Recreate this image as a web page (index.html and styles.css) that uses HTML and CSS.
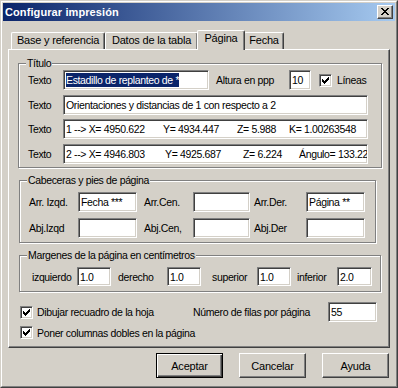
FILE: index.html
```html
<!DOCTYPE html>
<html lang="es">
<head>
<meta charset="utf-8">
<title>Configurar impresión</title>
<link rel="stylesheet" href="styles.css">
</head>
<body>
<div class="window">
  <div class="frame">
    <div class="titlebar">
      <span class="title">Configurar impresión</span>
      <div class="close">
        <svg width="8" height="7" viewBox="0 0 8 7" shape-rendering="crispEdges"><path d="M0 0h2v1H0zM6 0h2v1H6zM1 1h2v1H1zM5 1h2v1H5zM2 2h4v1H2zM3 3h2v1H3zM2 4h4v1H2zM1 5h2v1H1zM5 5h2v1H5zM0 6h2v1H0zM6 6h2v1H6z" fill="#000"/></svg>
      </div>
    </div>

    <div class="tabs">
      <div class="tab t1">Base y referencia</div>
      <div class="tab t2">Datos de la tabla</div>
      <div class="tab sel t3">Página</div>
      <div class="tab t4">Fecha</div>
    </div>

    <div class="panel">
      <div class="group g1">
        <span class="legend">Título</span>
        <div class="row">
          <span class="lbl l-texto">Texto</span>
          <div class="edit e-t1"><span class="selected">Estadillo de replanteo de *</span></div>
          <span class="lbl l-altura">Altura en ppp</span>
          <div class="edit e-ppp">10</div>
          <span class="check"><svg width="11" height="11" viewBox="0 0 11 11" shape-rendering="crispEdges"><path d="M2 4h1v3H2zM3 5h1v3H3zM4 6h1v3H4zM5 5h1v3H5zM6 4h1v3H6zM7 3h1v3H7zM8 2h1v3H8z" fill="#000"/></svg></span>
          <span class="lbl l-lineas">Líneas</span>
        </div>
        <div class="row r2">
          <span class="lbl l-texto">Texto</span>
          <div class="edit e-long">Orientaciones y distancias de 1 con respecto a 2</div>
        </div>
        <div class="row r3">
          <span class="lbl l-texto">Texto</span>
          <div class="edit e-long"><span class="seg s3a">1 --&gt; X= 4950.622</span><span class="seg s3b">Y= 4934.447</span><span class="seg s3c">Z= 5.988</span><span class="seg">K= 1.00263548</span></div>
        </div>
        <div class="row r4">
          <span class="lbl l-texto">Texto</span>
          <div class="edit e-long"><span class="seg s4a">2 --&gt; X= 4946.803</span><span class="seg s4b">Y= 4925.687</span><span class="seg s4c">Z= 6.224</span><span class="seg">Ángulo= 133.2245</span></div>
        </div>
      </div>

      <div class="group g2">
        <span class="legend">Cabeceras y pies de página</span>
        <div class="row">
          <span class="lbl l-izq">Arr. Izqd.</span>
          <div class="edit e-izq">Fecha ***</div>
          <span class="lbl l-cen">Arr.Cen.</span>
          <div class="edit e-cen"></div>
          <span class="lbl l-der">Arr.Der.</span>
          <div class="edit e-der">Página **</div>
        </div>
        <div class="row r-abj">
          <span class="lbl l-izq">Abj.Izqd</span>
          <div class="edit e-izq"></div>
          <span class="lbl l-cen">Abj.Cen,</span>
          <div class="edit e-cen"></div>
          <span class="lbl l-der">Abj.Der</span>
          <div class="edit e-der"></div>
        </div>
      </div>

      <div class="group g3">
        <span class="legend">Margenes de la página en centímetros</span>
        <div class="row row-m">
          <span class="lbl l-izqd">izquierdo</span>
          <div class="edit e-m">1.0</div>
          <span class="lbl l-dcho">derecho</span>
          <div class="edit e-m">1.0</div>
          <span class="lbl l-sup">superior</span>
          <div class="edit e-m">1.0</div>
          <span class="lbl l-inf">inferior</span>
          <div class="edit e-m e-m2">2.0</div>
        </div>
      </div>

      <div class="row opt1">
        <span class="check"><svg width="11" height="11" viewBox="0 0 11 11" shape-rendering="crispEdges"><path d="M2 4h1v3H2zM3 5h1v3H3zM4 6h1v3H4zM5 5h1v3H5zM6 4h1v3H6zM7 3h1v3H7zM8 2h1v3H8z" fill="#000"/></svg></span>
        <span class="lbl l-dib">Dibujar recuadro de la hoja</span>
        <span class="lbl l-num">Número de filas por página</span>
        <div class="edit e-num">55</div>
      </div>
      <div class="row opt2">
        <span class="check"><svg width="11" height="11" viewBox="0 0 11 11" shape-rendering="crispEdges"><path d="M2 4h1v3H2zM3 5h1v3H3zM4 6h1v3H4zM5 5h1v3H5zM6 4h1v3H6zM7 3h1v3H7zM8 2h1v3H8z" fill="#000"/></svg></span>
        <span class="lbl l-dib">Poner columnas dobles en la página</span>
      </div>
    </div>

    <div class="buttons">
      <div class="btn default">Aceptar</div>
      <div class="btn">Cancelar</div>
      <div class="btn">Ayuda</div>
    </div>
  </div>
</div>
</body>
</html>
```

FILE: styles.css
```css
* { box-sizing: border-box; }
html, body { margin: 0; padding: 0; }
body {
  width: 398px;
  height: 388px;
  overflow: hidden;
  background: #D4D0C8;
  color: #000;
  font-family: "Liberation Sans", Arial, sans-serif;
  font-size: 10.5px;
  letter-spacing: -0.35px;
}
.window {
  width: 398px;
  height: 388px;
  border: 1px solid;
  border-color: #D4D0C8 #404040 #404040 #D4D0C8;
}
.frame {
  height: 100%;
  border: 1px solid;
  border-color: #fff #808080 #808080 #fff;
  padding: 1px;
}
.titlebar {
  height: 18px;
  background: linear-gradient(to right, #0A246A, #A6CAF0);
  display: flex;
  align-items: center;
  justify-content: space-between;
  padding: 0 2px;
}
.title {
  color: #fff;
  font-weight: bold;
  font-size: 11px;
  letter-spacing: 0.1px;
}
.close {
  width: 16px;
  height: 14px;
  background: #D4D0C8;
  border: 1px solid;
  border-color: #fff #404040 #404040 #fff;
  box-shadow: inset -1px -1px #808080;
  display: flex;
  align-items: center;
  justify-content: center;
  padding: 0 1px 1px 0;
}
.close svg { display: block; }

/* tabs */
.tabs {
  display: flex;
  align-items: flex-end;
  height: 19px;
  margin: 9px 0 0 8px;
}
.tab {
  height: 17px;
  border: 1px solid;
  border-bottom: 0;
  border-color: #fff #404040 #fff #fff;
  box-shadow: inset -1px 0 #808080;
  border-radius: 2px 2px 0 0;
  text-align: center;
  line-height: 15px;
  font-size: 11px;
  letter-spacing: -0.2px;
}
.tab.sel {
  height: 20px;
  margin: 0 -1px -1px -1px;
  position: relative;
  z-index: 1;
  background: #D4D0C8;
  line-height: 14px;
}
.t1 { width: 94px; }
.t2 { width: 93px; }
.t3 { width: 48px; }
.t4 { width: 40px; }

/* tab page */
.panel {
  margin-left: 5px;
  width: 382px;
  height: 299px;
  border: 1px solid;
  border-color: #fff #404040 #404040 #fff;
  box-shadow: inset -1px -1px #808080;
}

/* group boxes */
.group {
  position: relative;
  border: 1px solid #808080;
  box-shadow: inset 1px 1px #fff, 1px 1px #fff;
}
.legend {
  position: absolute;
  top: -7px;
  left: 7px;
  padding: 0 1px;
  background: #D4D0C8;
  line-height: 13px;
  white-space: nowrap;
}
.g1 { margin: 13px 0 0 9px; width: 364px; height: 105px; padding: 6px 0 0 9px; }
.g2 { margin: 12px 0 0 10px; width: 357px; height: 63px; padding: 11px 0 0 9px; }
.g3 { margin: 12px 0 0 10px; width: 362px; height: 37px; padding: 11px 0 0 12px; }

.row {
  display: flex;
  align-items: center;
  height: 20px;
}
.r2 { margin-top: 5px; }
.r3 { margin-top: 4px; }
.r4 { margin-top: 5px; }
.r-abj { margin-top: 6px; }
.row-m { height: 19px; }

.lbl { white-space: nowrap; flex: none; }
.l-texto { width: 35px; }
.l-altura { width: 73px; margin-left: 7px; }
.l-lineas { margin-left: 5px; }
.l-izq { width: 49px; }
.l-cen { width: 49px; margin-left: 7px; }
.l-der { width: 52px; margin-left: 4px; }
.l-izqd { width: 45px; }
.l-dcho { width: 49px; margin-left: 7px; }
.l-sup { width: 45px; margin-left: 11px; }
.l-inf { width: 40px; margin-left: 6px; }

/* edit boxes */
.edit {
  flex: none;
  height: 20px;
  background: #fff;
  border: 1px solid;
  border-color: #808080 #fff #fff #808080;
  box-shadow: inset 1px 1px #404040, inset -1px -1px #D4D0C8;
  padding-left: 2px;
  display: flex;
  align-items: center;
  white-space: nowrap;
  overflow: hidden;
}
.row-m .edit { height: 19px; }
.e-t1 { width: 146px; }
.e-ppp { width: 22px; }
.e-long { width: 305px; }
.e-izq { width: 59px; }
.e-cen { width: 57px; }
.e-der { width: 59px; }
.e-m { width: 34px; }
.e-m2 { width: 35px; }
.e-num { width: 49px; }

.selected {
  background: #0A246A;
  color: #fff;
  height: 14px;
  line-height: 14px;
  display: inline-block;
}
.seg { display: inline-block; flex: none; }
.s3a { width: 97px; }
.s3b { width: 74px; }
.s3c { width: 52px; }
.s4a { width: 99px; }
.s4b { width: 78px; }
.s4c { width: 56px; }

/* checkbox */
.check {
  flex: none;
  width: 13px;
  height: 13px;
  background: #fff;
  border: 1px solid;
  border-color: #808080 #fff #fff #808080;
  box-shadow: inset 1px 1px #404040, inset -1px -1px #D4D0C8;
}
.check svg { display: block; }
.row .check { margin-left: 8px; }

.opt1 { margin: 10px 0 0 11px; }
.opt1 .check, .opt2 .check { margin-left: 0; }
.l-dib { margin-left: 4px; }
.opt1 .l-dib { width: 156px; }
.l-num { width: 135px; }
.opt2 { margin: 4px 0 0 11px; height: 13px; }

/* buttons */
.buttons {
  display: flex;
  justify-content: flex-end;
  gap: 16px;
  margin-top: 5px;
  padding-right: 6px;
}
.btn {
  width: 67px;
  height: 25px;
  border: 1px solid;
  border-color: #fff #404040 #404040 #fff;
  box-shadow: inset -1px -1px #808080;
  display: flex;
  align-items: center;
  justify-content: center;
  font-size: 11px;
  letter-spacing: -0.2px;
}
.btn.default {
  border-color: #000;
  box-shadow: inset 1px 1px #fff, inset -1px -1px #404040, inset -2px -2px #808080;
}
```
